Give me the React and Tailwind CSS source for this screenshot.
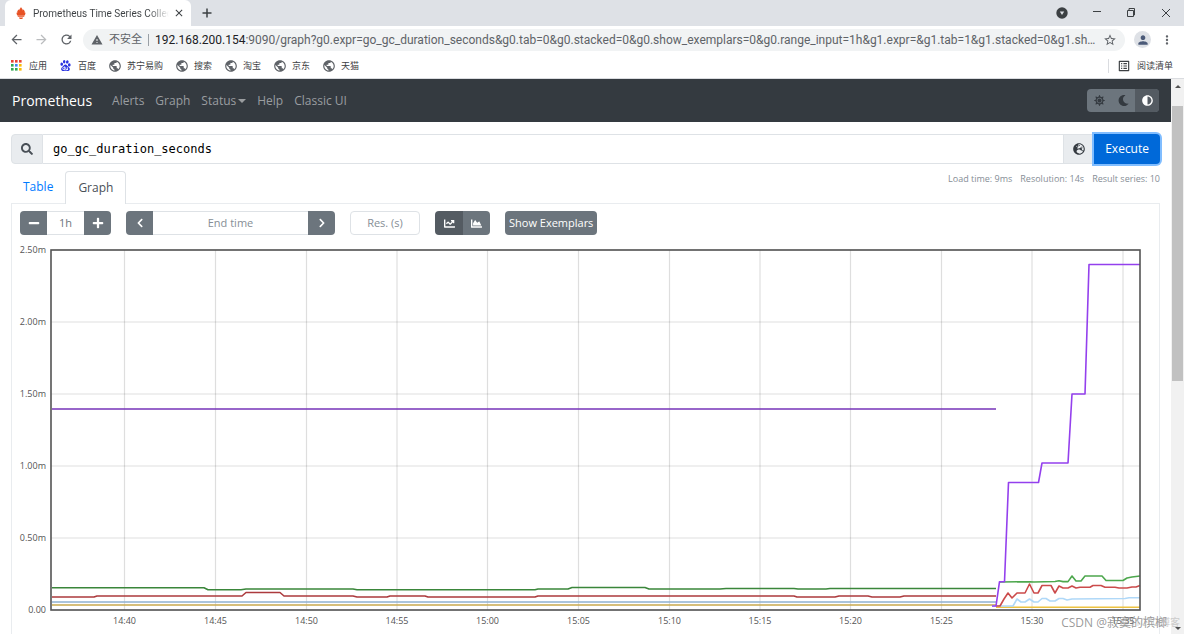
import React, { useState } from "react";
import {
  FaChartArea,
  FaChartLine,
  FaChevronLeft,
  FaChevronRight,
  FaGlobeEurope,
  FaMinus,
  FaMoon,
  FaPlus,
  FaSearch,
  FaAdjust,
  FaSun,
} from "react-icons/fa";
import {
  MdArrowBack,
  MdArrowForward,
  MdClose,
  MdMoreVert,
  MdOutlineListAlt,
  MdPerson,
  MdRefresh,
  MdStarBorder,
  MdWarning,
  MdPublic,
} from "react-icons/md";
import { SiBaidu } from "react-icons/si";

const bookmarks = ["苏宁易购", "搜索", "淘宝", "京东", "天猫"];

const navLinks = ["Alerts", "Graph", "Status", "Help", "Classic UI"];

const xTicks = [
  { x: 124.5, label: "14:40" },
  { x: 215.5, label: "14:45" },
  { x: 306.5, label: "14:50" },
  { x: 397, label: "14:55" },
  { x: 487.5, label: "15:00" },
  { x: 578.5, label: "15:05" },
  { x: 669.5, label: "15:10" },
  { x: 760, label: "15:15" },
  { x: 850.5, label: "15:20" },
  { x: 941.5, label: "15:25" },
  { x: 1032, label: "15:30" },
  { x: 1123, label: "15:35" },
];

const yTicks = [
  { y: 250, label: "2.50m" },
  { y: 322, label: "2.00m" },
  { y: 394, label: "1.50m" },
  { y: 466, label: "1.00m" },
  { y: 538, label: "0.50m" },
  { y: 610, label: "0.00" },
];

const series = [
  { color: "#c9a84c", points: "52,605 996,605" },
  { color: "#8fb0cf", points: "52,602 996,602" },
  {
    color: "#ac3a3d",
    points:
      "52,597 94,597 97,596 242,596 246,592.5 280,592.5 284,596 353,596 357,597 387,597 390,596 425,596 428,597 535,597 538,596 794,596 797,597 835,597 839,596 868,596 872,597 900,597 904,596 996,596",
  },
  {
    color: "#3a863a",
    points:
      "52,587.7 204,587.7 208,589.7 241,589.7 246,589 353,589 357,589.8 535,589.8 538,589 568,589 572,587.5 645,587.5 649,589 720,589 726,588.5 794,588.5 798,589 826,589 830,588.5 996,588.5",
  },
  { color: "#7633b8", points: "52,409 996,409" },
  { color: "#edc240", points: "996,607.3 1140,607.3" },
  {
    color: "#afd8f8",
    points:
      "992,606 1013,606 1017,599 1021,602 1025,602 1029.5,599 1034,602 1038,602 1042,598.5 1046,598.5 1050,601 1055,601 1059,598.5 1063,598.5 1067,600 1072,599 1125,598.5 1129,597.7 1140,597.7",
  },
  {
    color: "#cb4b4b",
    points:
      "996,606 1000,606 1004,599 1008,593 1012,598 1017,593 1025,593 1029.5,584 1034,593 1038,593 1042,585.5 1051,585.5 1055,593 1059,586 1063,588 1068,588 1072,586 1076,588 1080,587.3 1090,587.3 1093,585.5 1101,585.5 1105,587.3 1115,587.3 1119,588 1127,588 1132,587 1136,587 1140,585.5",
  },
  {
    color: "#4da74d",
    points:
      "1000,582 1030,581.7 1034,582 1055,581.5 1059,580.8 1063,581.6 1068,581.6 1072,576 1076,581 1081,581 1085,576 1102,576 1106,580.5 1123,580.5 1127,578 1132,577 1140,576",
  },
  {
    color: "#9440ed",
    points:
      "992,606 996,606 999.5,581.7 1004.5,581.7 1008.5,482.5 1038.5,482.5 1042,463 1068,463 1072,394 1085,394 1089,264.5 1140,264.5",
  },
];

function PrometheusFlame() {
  return (
    <svg viewBox="0 0 20 24" className="h-3 w-2.5" fill="#e75225">
      <path d="M10 0c1 3 4 4 3.5 7 1-.5 1-1.500 1-2.500C17 7 18 9 17.500 12l1.500-1c0 3-1 5-2.500 6.500h-13C2 16 1 14 1 11l1.500 1C2 9 3 7 5.500 4.500c0 1 0 2 1 2.500C6 4 9 3 10 0zM3.500 18.500h13V20h-13zM6 21h8c0 2-2 3-4 3s-4-1-4-3z" />
    </svg>
  );
}

function AppsGrid() {
  const colors = ["#ea4335", "#ea4335", "#ea4335", "#34a853", "#4285f4", "#fbbc04", "#34a853", "#34a853", "#fbbc04"];
  return (
    <svg viewBox="0 0 11 11" className="size-[11px]">
      {colors.map((c, i) => (
        <rect key={i} x={(i % 3) * 4} y={Math.floor(i / 3) * 4} width="2.6" height="2.6" fill={c} />
      ))}
    </svg>
  );
}

function TabStrip() {
  return (
    <div className="flex h-[26px] items-stretch bg-[#dee1e6] pl-[5px] text-[#3c4043]">
      <div className="flex w-[186px] items-center rounded-t-md bg-white pr-1.5 pl-[11px]">
        <PrometheusFlame />
        <span className="ml-[7px] min-w-0 flex-1 overflow-hidden bg-linear-to-r from-[#3c4043] from-85% to-transparent bg-clip-text font-['Roboto',sans-serif] text-[10px] whitespace-nowrap text-transparent">
          Prometheus Time Series Collection
        </span>
        <button type="button" aria-label="Close tab" className="ml-1">
          <MdClose className="size-3" />
        </button>
      </div>
      <button type="button" aria-label="New tab" className="ml-2.5">
        <svg viewBox="0 0 12 12" className="size-3" stroke="currentColor" strokeWidth="1.5">
          <path d="M6 1.5v9M1.5 6h9" />
        </svg>
      </button>
      <div className="ml-auto flex items-center">
        <button type="button" aria-label="Search tabs" className="mr-6">
          <svg viewBox="0 0 12 12" className="size-3">
            <circle cx="6" cy="6" r="5.7" fill="#3c4043" />
            <path d="M3.8 4.6h4.4L6 8z" fill="#dee1e6" />
          </svg>
        </button>
        <button type="button" aria-label="Minimize" className="mr-6">
          <svg viewBox="0 0 10 10" className="size-2.5" stroke="currentColor">
            <path d="M1 3.5h8" />
          </svg>
        </button>
        <button type="button" aria-label="Restore" className="mr-[25px]">
          <svg viewBox="0 0 10 10" className="size-2.5" stroke="currentColor" fill="none">
            <path d="M1.5 2.5h6v6h-6zM3 2.5v-2h5.5V7H7.5" />
          </svg>
        </button>
        <button type="button" aria-label="Close window" className="mr-[13px]">
          <svg viewBox="0 0 10 10" className="size-2.5" stroke="currentColor">
            <path d="M1 1l8 8M9 1L1 9" />
          </svg>
        </button>
      </div>
    </div>
  );
}

function AddressBar() {
  return (
    <div className="flex h-[27px] items-center pr-2.5 pl-[9px] text-[#5f6368]">
      <button type="button" aria-label="Back">
        <MdArrowBack className="size-[15px]" />
      </button>
      <button type="button" aria-label="Forward" className="ml-2.5 text-[#babcbe]">
        <MdArrowForward className="size-[15px]" />
      </button>
      <button type="button" aria-label="Reload" className="ml-2.5">
        <MdRefresh className="size-[15px]" />
      </button>
      <div className="ml-[9px] flex h-[22px] min-w-0 flex-1 items-center rounded-full bg-[#f1f3f4] px-2">
        <MdWarning className="size-3 shrink-0" />
        <span className="ml-1.5 text-[11px] whitespace-nowrap">不安全</span>
        <span className="mx-1.5 h-3 w-px shrink-0 bg-[#9aa0a6]" />
        <span className="min-w-0 flex-1 truncate font-['Roboto',sans-serif] text-[12px]">
          <span className="text-[#202124]">192.168.200.154</span>
          :9090/graph?g0.expr=go_gc_duration_seconds&amp;g0.tab=0&amp;g0.stacked=0&amp;g0.show_exemplars=0&amp;g0.range_input=1h&amp;g1.expr=&amp;g1.tab=1&amp;g1.stacked=0&amp;g1.show_exemplars=0
        </span>
        <button type="button" aria-label="Bookmark this page" className="ml-1.5">
          <MdStarBorder className="size-3.5" />
        </button>
      </div>
      <button
        type="button"
        aria-label="Profile"
        className="ml-[9px] flex size-[17px] items-center justify-center rounded-full bg-[#dee1e6] text-[#4b5a78]"
      >
        <MdPerson className="size-3.5" />
      </button>
      <button type="button" aria-label="Menu" className="ml-[9px]">
        <MdMoreVert className="size-3.5" />
      </button>
    </div>
  );
}

function BookmarksBar() {
  return (
    <div className="flex h-[26px] items-center border-b border-[#dadce0] px-[11px] text-[9px] text-[#3c4043]">
      <a href="#apps" className="flex items-center gap-[7px]">
        <AppsGrid />
        应用
      </a>
      <a href="#baidu" className="ml-[13px] flex items-center gap-[7px]">
        <SiBaidu className="size-[11px] text-[#2932e1]" />
        百度
      </a>
      {bookmarks.map((name) => (
        <a key={name} href="#bookmark" className="ml-3 flex items-center gap-[5px]">
          <MdPublic className="size-3.5 text-[#5f6368]" />
          {name}
        </a>
      ))}
      <button type="button" className="ml-auto flex items-center gap-1.5 border-l border-[#dadce0] pl-2">
        <MdOutlineListAlt className="size-3.5" />
        阅读清单
      </button>
    </div>
  );
}

function Navbar() {
  return (
    <nav className="flex h-[43px] items-center bg-[#343a40] px-3 text-[12px] text-[#9a9da0]">
      <a href="#home" className="mr-5 text-[14px] text-white">
        Prometheus
      </a>
      <div className="flex gap-[11px]">
        {navLinks.map((link) => (
          <a key={link} href="#nav" className="flex items-center">
            {link}
            {link === "Status" && (
              <span className="ml-0.5 border-x-4 border-t-4 border-x-transparent border-t-current" />
            )}
          </a>
        ))}
      </div>
      <div className="ml-auto flex overflow-hidden rounded-sm bg-[#6c757d] text-[#343a40]">
        <button type="button" aria-label="Light theme" className="flex h-[23px] w-6 items-center justify-center">
          <FaSun className="size-[11px]" />
        </button>
        <button type="button" aria-label="Dark theme" className="flex h-[23px] w-6 items-center justify-center">
          <FaMoon className="size-[11px]" />
        </button>
        <button
          type="button"
          aria-label="Browser theme"
          className="flex h-[23px] w-6 items-center justify-center bg-[#545b62] text-white"
        >
          <FaAdjust className="size-[11px]" />
        </button>
      </div>
    </nav>
  );
}

function ExpressionRow() {
  const [expr, setExpr] = useState("go_gc_duration_seconds");
  return (
    <div className="flex h-[30px]">
      <span className="flex w-8 items-center justify-center rounded-l-sm border border-[#dee2e6] bg-[#e9ecef] text-[#495057]">
        <FaSearch className="size-3" />
      </span>
      <input
        aria-label="Expression"
        value={expr}
        onChange={(e) => setExpr(e.target.value)}
        className="min-w-0 flex-1 border-y border-[#dee2e6] px-2.5 font-['DejaVu_Sans_Mono',monospace] text-[12px] text-black outline-none"
      />
      <button
        type="button"
        aria-label="Open metrics explorer"
        className="flex w-[31px] items-center justify-center border border-[#dee2e6] bg-[#e9ecef] text-[#343a40]"
      >
        <FaGlobeEurope className="size-3" />
      </button>
      <button
        type="button"
        className="rounded-r-sm bg-[#0069d9] px-[11px] text-[12px] text-white ring-2 ring-[#80bdff]"
      >
        Execute
      </button>
    </div>
  );
}

const iconButton = "flex w-[27px] items-center justify-center bg-[#6c757d] text-white";

function GraphControls() {
  return (
    <div className="flex h-6 gap-[15px] pl-2 text-[11px] text-[#6c757d]">
      <div className="flex">
        <button type="button" aria-label="Decrease range" className={iconButton + " rounded-l-sm"}>
          <FaMinus className="size-3" />
        </button>
        <input
          aria-label="Range"
          defaultValue="1h"
          className="w-[37px] border-y border-[#dee2e6] text-center outline-none"
        />
        <button type="button" aria-label="Increase range" className={iconButton + " rounded-r-sm"}>
          <FaPlus className="size-3" />
        </button>
      </div>
      <div className="flex">
        <button type="button" aria-label="Earlier" className={iconButton + " rounded-l-sm"}>
          <FaChevronLeft className="size-2.5" />
        </button>
        <input
          aria-label="End time"
          placeholder="End time"
          className="w-[155px] border-y border-[#dee2e6] text-center outline-none placeholder:text-[#868e96]"
        />
        <button type="button" aria-label="Later" className={iconButton + " rounded-r-sm"}>
          <FaChevronRight className="size-2.5" />
        </button>
      </div>
      <input
        aria-label="Resolution"
        placeholder="Res. (s)"
        className="w-[70px] rounded-sm border border-[#dee2e6] text-center outline-none placeholder:text-[#868e96]"
      />
      <div className="flex overflow-hidden rounded-sm">
        <button
          type="button"
          aria-label="Line graph"
          className="flex w-7 items-center justify-center bg-[#545b62] text-white"
        >
          <FaChartLine className="size-[11px]" />
        </button>
        <button type="button" aria-label="Stacked graph" className={iconButton}>
          <FaChartArea className="size-[11px]" />
        </button>
      </div>
      <button type="button" className="rounded-sm bg-[#6c757d] px-1 text-white">
        Show Exemplars
      </button>
    </div>
  );
}

function Chart() {
  return (
    <svg viewBox="12 243 1147 392" className="mt-2 block w-full" fill="none">
      <g stroke="#000" strokeOpacity="0.13" strokeWidth="1.2">
        {xTicks.map((t) => (
          <path key={t.label} d={`M${t.x} 250V610`} />
        ))}
        {yTicks.map((t) => (
          <path key={t.label} d={`M51 ${t.y}H1140`} />
        ))}
      </g>
      {series.map((s, i) => (
        <polyline key={i} points={s.points} stroke={s.color} strokeWidth="1.6" strokeLinejoin="round" />
      ))}
      <rect x="51" y="250" width="1089" height="360" stroke="#545454" strokeWidth="1.6" />
      <g fill="#545454" fontSize="9">
        {xTicks.map((t) => (
          <text key={t.label} x={t.x} y="624" textAnchor="middle">
            {t.label}
          </text>
        ))}
        {yTicks.map((t) => (
          <text key={t.label} x="46" y={t.y + 3} textAnchor="end">
            {t.label}
          </text>
        ))}
      </g>
    </svg>
  );
}

function Scrollbar() {
  return (
    <div className="flex w-[13px] shrink-0 flex-col items-center bg-[#f1f1f1]">
      <span className="mt-1.5 border-x-3 border-b-3 border-x-transparent border-b-[#505050]" />
      <span className="mt-[18px] h-[275px] w-[11px] bg-[#c1c1c1]" />
      <span className="mt-auto mb-1 border-x-3 border-t-3 border-x-transparent border-t-[#505050]" />
    </div>
  );
}

export default function App() {
  return (
    <div className="relative flex h-screen flex-col overflow-hidden bg-white font-['Open_Sans','Noto_Sans_CJK_SC',sans-serif]">
      <TabStrip />
      <AddressBar />
      <BookmarksBar />
      <div className="flex min-h-0 flex-1">
        <div className="min-w-0 flex-1 overflow-hidden">
          <Navbar />
          <main className="px-[11px] pt-3">
            <ExpressionRow />
            <div className="flex items-end text-[12px]">
              <button type="button" className="h-8 px-3 text-[#007bff]">
                Table
              </button>
              <button
                type="button"
                className="z-10 mt-[7px] -mb-px h-[33px] rounded-t-sm border border-b-0 border-[#dee2e6] bg-white px-3 text-[#495057]"
              >
                Graph
              </button>
              <div className="ml-auto flex gap-2 self-start pt-2 text-[9px] text-[#868e96]">
                <span>Load time: 9ms</span>
                <span>Resolution: 14s</span>
                <span>Result series: 10</span>
              </div>
            </div>
            <div className="border border-[#e9ecef] pt-[7px]">
              <GraphControls />
              <Chart />
            </div>
          </main>
        </div>
        <Scrollbar />
      </div>
      <div className="absolute right-[17px] bottom-0.5 text-[12px] text-[#808080]/80">CSDN @寂寞的槟榔</div>
      <div className="absolute right-1 bottom-1 text-[10px] text-[#b0b0b0]/60">@51CTO博客</div>
    </div>
  );
}
